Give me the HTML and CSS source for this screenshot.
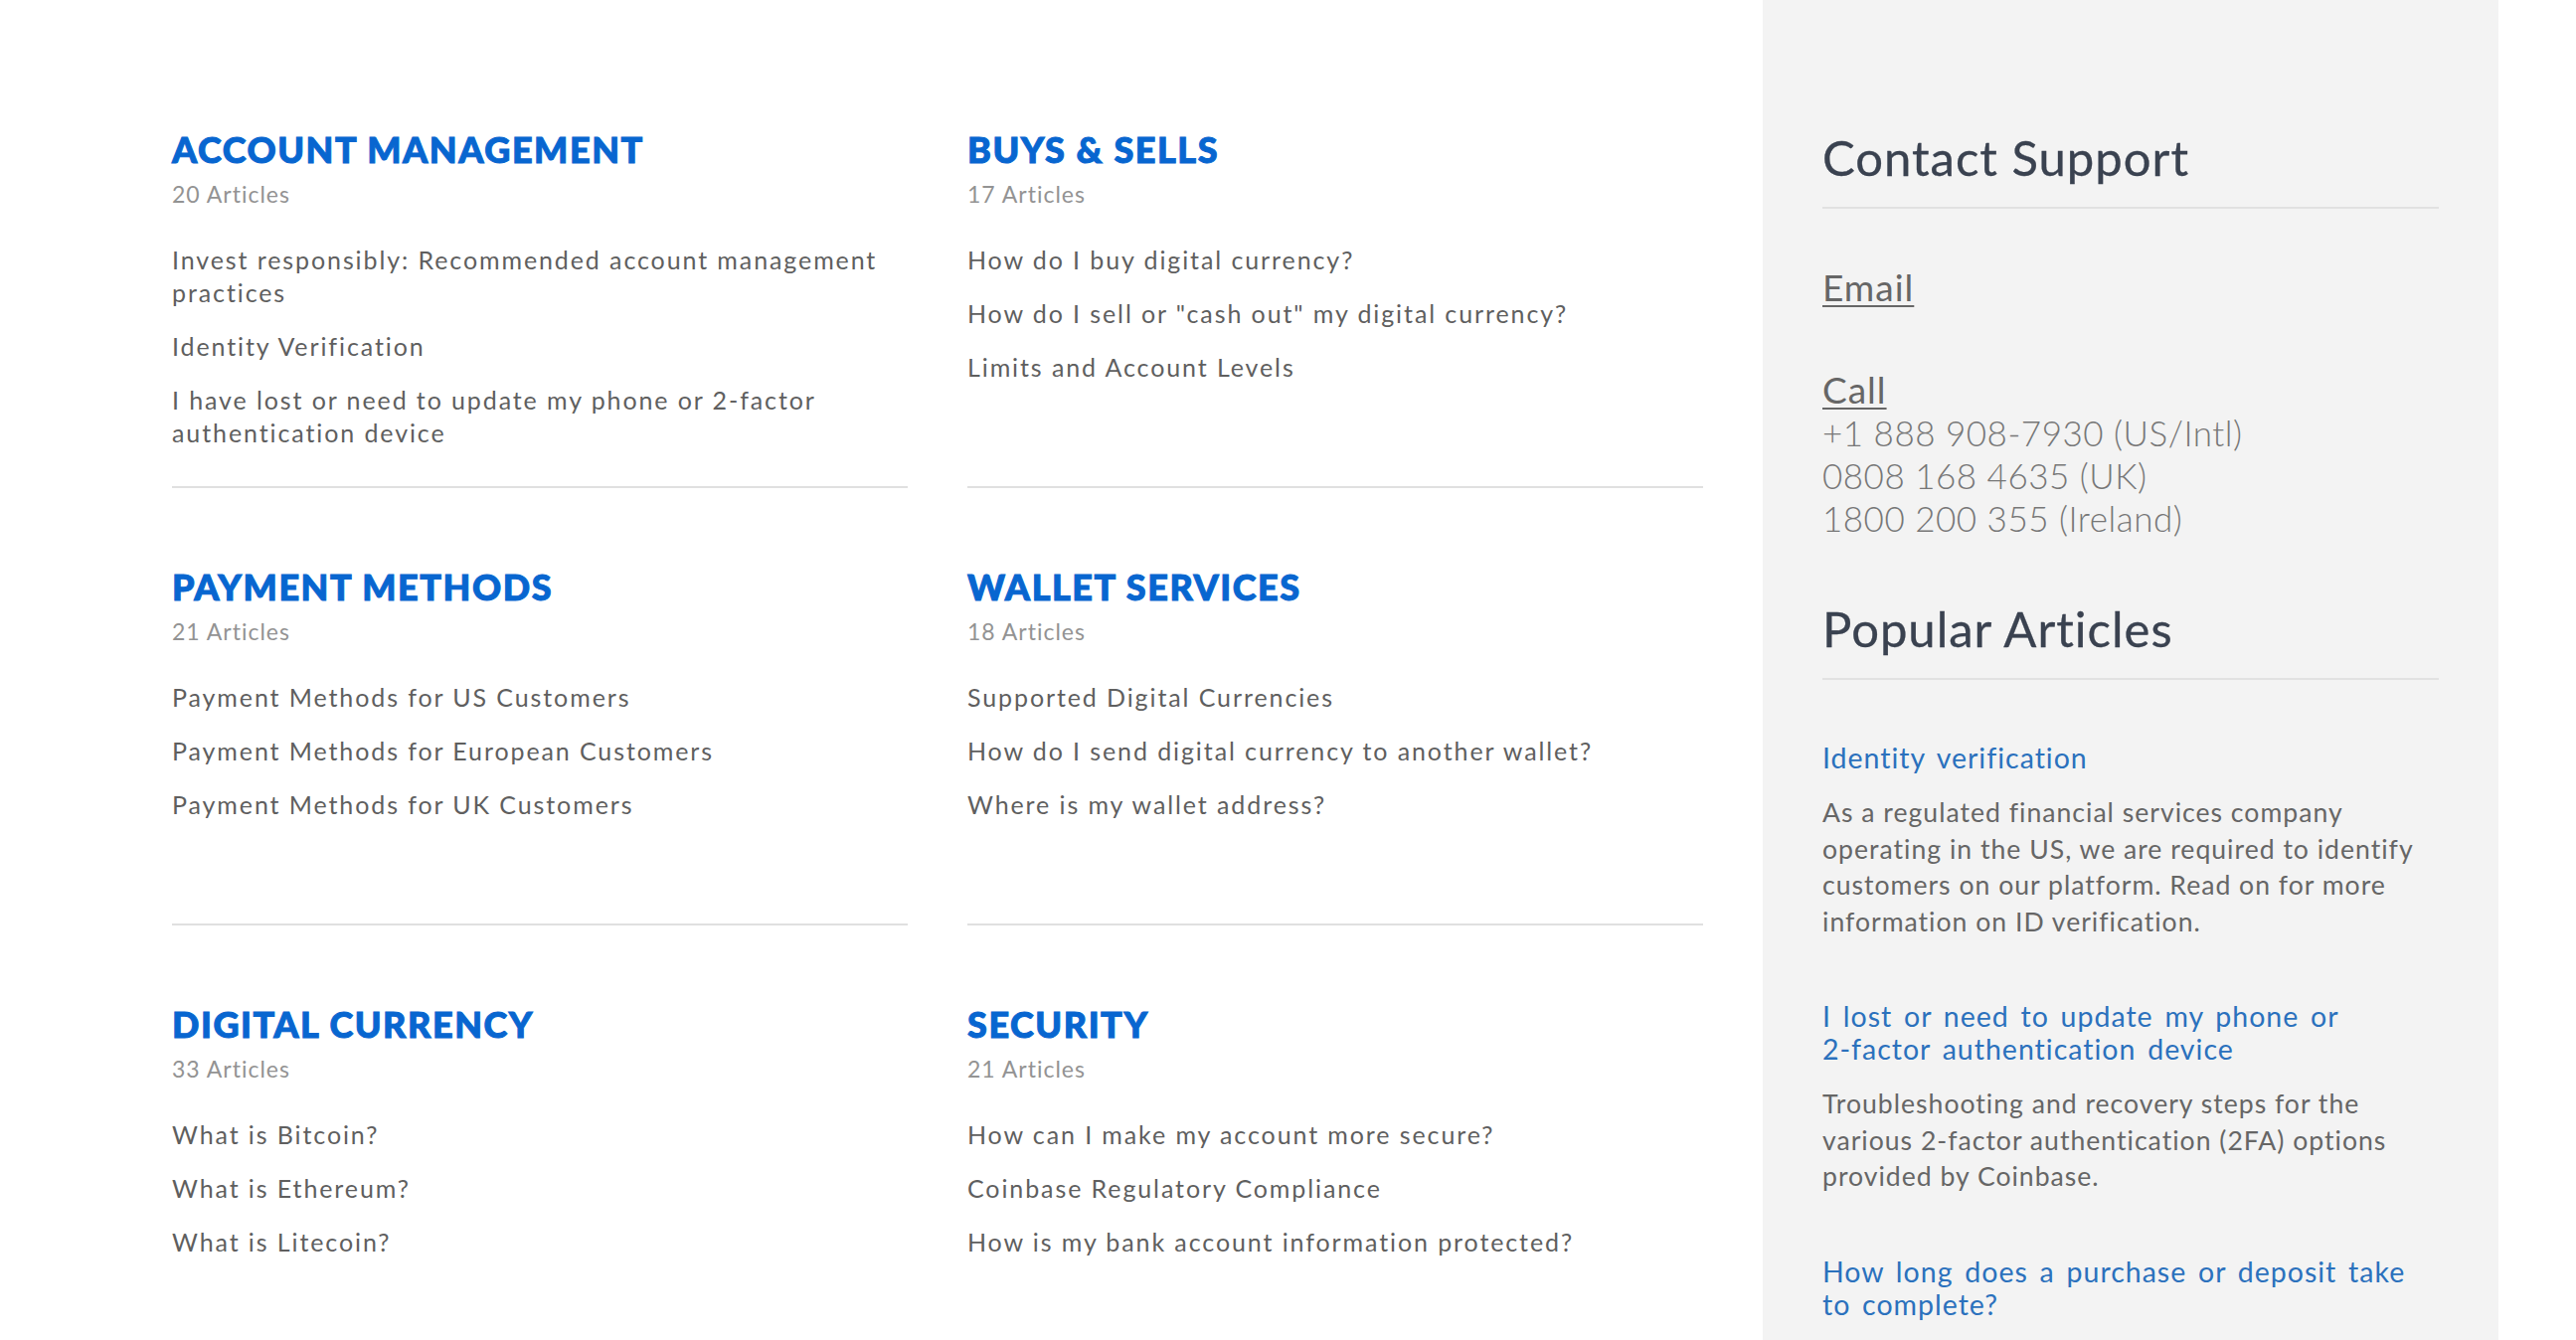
FILE: index.html
```html
<!DOCTYPE html>
<html lang="en">
<head>
<meta charset="utf-8">
<title>Support</title>
<link rel="stylesheet" href="styles.css">
</head>
<body>
<div class="page">
  <main class="categories">
    <section class="cat">
      <h2 class="cat-title">ACCOUNT MANAGEMENT</h2>
      <p class="cat-count">20 Articles</p>
      <ul class="cat-links">
        <li><a href="#">Invest responsibly: Recommended account management practices</a></li>
        <li><a href="#">Identity Verification</a></li>
        <li><a href="#">I have lost or need to update my phone or 2-factor authentication device</a></li>
      </ul>
    </section>
    <section class="cat">
      <h2 class="cat-title">BUYS &amp; SELLS</h2>
      <p class="cat-count">17 Articles</p>
      <ul class="cat-links">
        <li><a href="#">How do I buy digital currency?</a></li>
        <li><a href="#">How do I sell or "cash out" my digital currency?</a></li>
        <li><a href="#">Limits and Account Levels</a></li>
      </ul>
    </section>
    <section class="cat">
      <h2 class="cat-title">PAYMENT METHODS</h2>
      <p class="cat-count">21 Articles</p>
      <ul class="cat-links">
        <li><a href="#">Payment Methods for US Customers</a></li>
        <li><a href="#">Payment Methods for European Customers</a></li>
        <li><a href="#">Payment Methods for UK Customers</a></li>
      </ul>
    </section>
    <section class="cat">
      <h2 class="cat-title">WALLET SERVICES</h2>
      <p class="cat-count">18 Articles</p>
      <ul class="cat-links">
        <li><a href="#">Supported Digital Currencies</a></li>
        <li><a href="#">How do I send digital currency to another wallet?</a></li>
        <li><a href="#">Where is my wallet address?</a></li>
      </ul>
    </section>
    <section class="cat">
      <h2 class="cat-title">DIGITAL CURRENCY</h2>
      <p class="cat-count">33 Articles</p>
      <ul class="cat-links">
        <li><a href="#">What is Bitcoin?</a></li>
        <li><a href="#">What is Ethereum?</a></li>
        <li><a href="#">What is Litecoin?</a></li>
      </ul>
    </section>
    <section class="cat">
      <h2 class="cat-title">SECURITY</h2>
      <p class="cat-count">21 Articles</p>
      <ul class="cat-links">
        <li><a href="#">How can I make my account more secure?</a></li>
        <li><a href="#">Coinbase Regulatory Compliance</a></li>
        <li><a href="#">How is my bank account information protected?</a></li>
      </ul>
    </section>
  </main>
  <aside class="sidebar">
    <h3 class="side-title">Contact Support</h3>
    <div class="contact contact-email"><a class="contact-link" href="#">Email</a></div>
    <div class="contact contact-call">
      <a class="contact-link" href="#">Call</a>
      <div class="phones">
        <div>+1 888 908-7930 (US/Intl)</div>
        <div>0808 168 4635 (UK)</div>
        <div>1800 200 355 (Ireland)</div>
      </div>
    </div>
    <h3 class="side-title side-title-popular">Popular Articles</h3>
    <div class="popular">
      <article class="pop-item">
        <a class="pop-title" href="#">Identity verification</a>
        <p class="pop-desc">As a regulated financial services company operating in the US, we are required to identify customers on our platform. Read on for more information on ID verification.</p>
      </article>
      <article class="pop-item">
        <a class="pop-title" href="#">I lost or need to update my phone or <span class="nobr">2-factor</span> authentication device</a>
        <p class="pop-desc">Troubleshooting and recovery steps for the various 2-factor authentication (2FA) options provided by Coinbase.</p>
      </article>
      <article class="pop-item">
        <a class="pop-title" href="#">How long does a purchase or deposit take to complete?</a>
      </article>
    </div>
  </aside>
</div>
</body>
</html>
```

FILE: styles.css
```css
html, body {
  margin: 0;
  padding: 0;
  background: #ffffff;
}

body {
  font-family: "Lato", "Liberation Sans", sans-serif;
  height: 1348px;
  overflow: hidden;
}

.nobr {
  white-space: nowrap;
}

.page {
  display: flex;
  align-items: stretch;
  gap: 60px;
  padding-left: 173px;
  height: 1348px;
}

.categories {
  display: grid;
  grid-template-columns: 740px 740px;
  column-gap: 60px;
  align-content: start;
  padding-top: 51px;
}

.cat {
  box-sizing: border-box;
  height: 440px;
  padding-top: 77px;
  border-bottom: 2px solid #e0e0e0;
}

.cat-title {
  margin: 0;
  font-size: 36px;
  line-height: 44px;
  font-weight: 900;
  color: #0866d0;
  letter-spacing: 1.55px;
  -webkit-text-stroke: 1px #0866d0;
}

.cat-count {
  margin: 8px 0 0;
  font-size: 23px;
  line-height: 30px;
  color: #939393;
  letter-spacing: 1px;
}

.cat-links {
  list-style: none;
  margin: 35px 0 0;
  padding: 0;
}

.cat-links li {
  font-size: 25px;
  line-height: 33px;
  letter-spacing: 1.9px;
}

.cat-links li + li {
  margin-top: 21px;
}

.cat-links a {
  color: #5f5f5f;
  text-decoration: none;
}

.sidebar {
  box-sizing: border-box;
  width: 740px;
  flex: 0 0 740px;
  background: #f3f3f3;
  padding: 128px 60px 0;
}

.side-title {
  margin: 0;
  font-size: 49px;
  line-height: 60px;
  font-weight: 400;
  color: #3a4250;
  letter-spacing: 1px;
  padding-bottom: 20px;
  border-bottom: 2px solid #e1e1e1;
  -webkit-text-stroke: 0.3px #3a4250;
}

.side-title-popular {
  margin-top: 59px;
}

.contact {
  font-size: 37px;
  line-height: 44px;
}

.contact-email {
  margin-top: 57px;
}

.contact-call {
  margin-top: 59px;
}

.contact-link {
  color: #666666;
  text-decoration: underline;
  text-decoration-thickness: 2px;
  text-underline-offset: 4px;
  letter-spacing: 1px;
}

.phones {
  font-size: 35px;
  line-height: 43px;
  font-weight: 300;
  color: #777777;
  letter-spacing: 0.5px;
}

.popular {
  display: flex;
  flex-direction: column;
  gap: 61px;
  margin-top: 62px;
}

.pop-title {
  display: block;
  max-width: 610px;
  font-size: 28.5px;
  line-height: 33px;
  color: #2b71bd;
  text-decoration: none;
  letter-spacing: 1px;
  word-spacing: 3.5px;
}

.pop-desc {
  margin: 20px 0 0;
  font-size: 26.6px;
  line-height: 36.5px;
  color: #666666;
  letter-spacing: 1px;
}
```
